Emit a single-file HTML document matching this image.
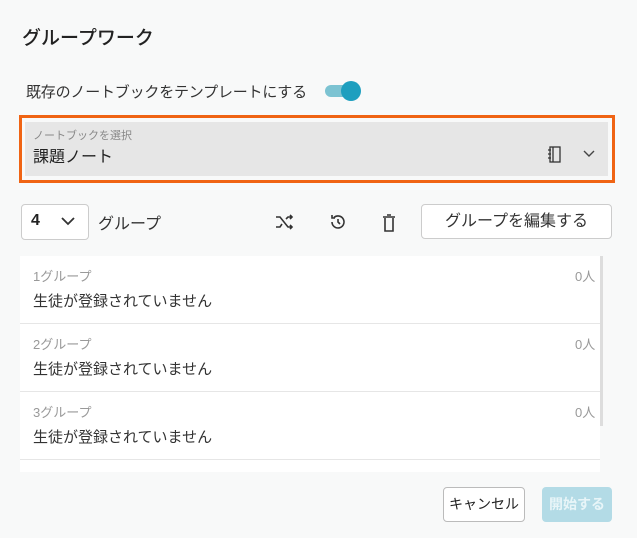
<!DOCTYPE html>
<html><head><meta charset="utf-8"><style>
*{margin:0;padding:0;box-sizing:border-box}
body{width:637px;height:538px;background:#f8f9f9;font-family:"Liberation Sans","Noto Sans CJK JP",sans-serif;color:#222;position:relative;overflow:hidden}
.a{position:absolute;white-space:nowrap}
</style></head><body>
<div class="a" style="left:22px;top:23px;font-size:19px;font-weight:500;color:#222">グループワーク</div>
<div class="a" style="left:26px;top:81px;font-size:15px;color:#333;letter-spacing:-0.2px">既存のノートブックをテンプレートにする</div>
<div class="a" style="left:325px;top:85px;width:32px;height:12px;border-radius:6px;background:#7cc3d2"></div>
<div class="a" style="left:341px;top:81px;width:20px;height:20px;border-radius:50%;background:#1e9fbf"></div>
<div class="a" style="left:19px;top:115px;width:596px;height:68px;border:3px solid #f06414;background:#f8f9f9"></div>
<div class="a" style="left:25px;top:122px;width:583px;height:54px;background:#e6e6e6"></div>
<div class="a" style="left:33px;top:127px;font-size:11px;color:#888">ノートブックを選択</div>
<div class="a" style="left:33px;top:143px;font-size:16px;color:#222">課題ノート</div>
<svg class="a" style="left:545px;top:145px" width="20" height="20" viewBox="0 0 20 20" fill="none" stroke="#333" stroke-width="1.3"><rect x="5" y="2" width="10" height="15"/><line x1="8" y1="2" x2="8" y2="17"/><path d="M3 5h3M3 9h3M3 13h3"/></svg>
<svg class="a" style="left:582px;top:148px" width="14" height="12" viewBox="0 0 14 12" fill="none" stroke="#444" stroke-width="1.4"><path d="M2 3l5 5 5-5"/></svg>
<div class="a" style="left:21px;top:204px;width:68px;height:36px;border:1px solid #ccc;border-radius:4px;background:#fff"></div>
<div class="a" style="left:31px;top:212px;font-size:16px;font-weight:bold">4</div>
<svg class="a" style="left:60px;top:214px" width="16" height="14" viewBox="0 0 16 14" fill="none" stroke="#333" stroke-width="1.8"><path d="M2 4l6 6 6-6"/></svg>
<div class="a" style="left:98px;top:210px;font-size:16px;color:#333">グループ</div>
<svg class="a" style="left:275px;top:213px" width="20" height="18" viewBox="0 0 20 18" fill="none" stroke="#333" stroke-width="1.6"><path d="M1 4h4l8 10h4M1 14h4l2-3M11 6l2-2h4M15 2l2 2-2 2M15 12l2 2-2 2"/></svg>
<svg class="a" style="left:329px;top:213px" width="18" height="18" viewBox="0 0 18 18" fill="none" stroke="#333" stroke-width="1.6"><path d="M3 9a6 6 0 1 0 2-4.5M3 2v3h3M9 6v3l2 2"/></svg>
<svg class="a" style="left:380px;top:213px" width="18" height="20" viewBox="0 0 18 20" fill="none" stroke="#333" stroke-width="1.6"><path d="M3 4h12M7 2h4M5 5v13h8V5"/></svg>
<div class="a" style="left:421px;top:204px;width:191px;height:35px;border:1px solid #ccc;border-radius:4px;background:#fff;font-size:16px;text-align:center;line-height:33px;color:#333">グループを編集する</div>
<div class="a" style="left:20px;top:256px;width:580px;height:216px;background:#fff"></div>
<div class="a" style="left:600px;top:256px;width:3px;height:170px;background:#ddd"></div>
<div class="a" style="left:20px;top:323px;width:580px;height:1px;background:#e6e6e6"></div>
<div class="a" style="left:20px;top:391px;width:580px;height:1px;background:#e6e6e6"></div>
<div class="a" style="left:20px;top:459px;width:580px;height:1px;background:#e6e6e6"></div>
<div class="a" style="left:33px;top:266px;font-size:13px;color:#999">1グループ</div>
<div class="a" style="left:575px;top:266px;font-size:13px;color:#999">0人</div>
<div class="a" style="left:33px;top:290px;font-size:15px;color:#333">生徒が登録されていません</div>
<div class="a" style="left:33px;top:334px;font-size:13px;color:#999">2グループ</div>
<div class="a" style="left:575px;top:334px;font-size:13px;color:#999">0人</div>
<div class="a" style="left:33px;top:358px;font-size:15px;color:#333">生徒が登録されていません</div>
<div class="a" style="left:33px;top:402px;font-size:13px;color:#999">3グループ</div>
<div class="a" style="left:575px;top:402px;font-size:13px;color:#999">0人</div>
<div class="a" style="left:33px;top:426px;font-size:15px;color:#333">生徒が登録されていません</div>
<div class="a" style="left:443px;top:487px;width:82px;height:35px;border:1px solid #bbb;border-radius:4px;background:#fff;font-size:14px;text-align:center;line-height:33px;color:#222">キャンセル</div>
<div class="a" style="left:542px;top:487px;width:70px;height:35px;border-radius:4px;background:#b3dbe6;font-size:14px;font-weight:bold;text-align:center;line-height:35px;color:#e8f5f8">開始する</div>
</body></html>
